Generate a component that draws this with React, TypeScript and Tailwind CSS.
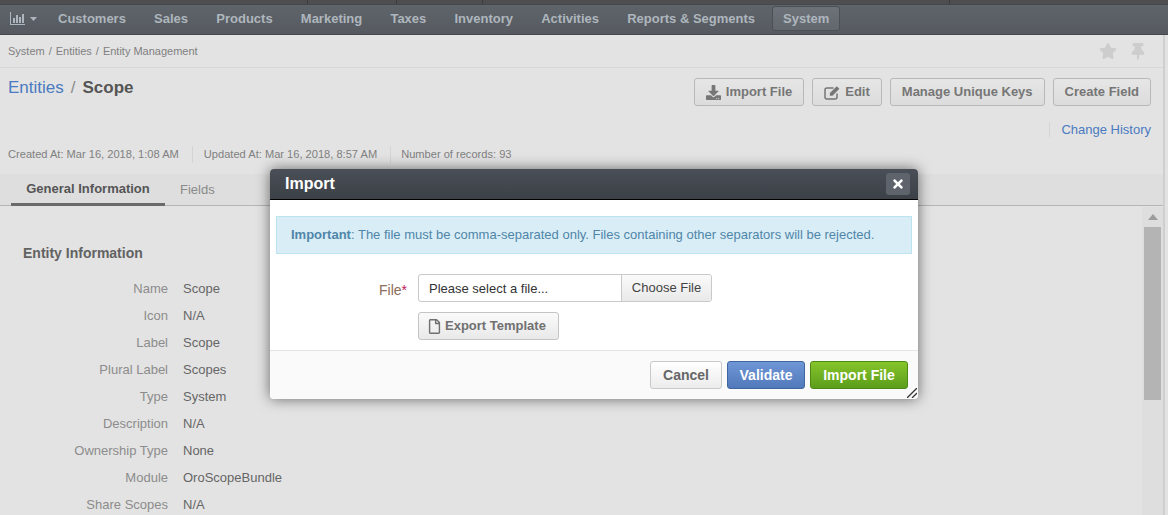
import React from 'react';
import { FaDownload, FaRegFile, FaStar, FaThumbtack, FaTimes } from 'react-icons/fa';

const menu = ['Customers', 'Sales', 'Products', 'Marketing', 'Taxes', 'Inventory', 'Activities', 'Reports & Segments'];

const info = [
  ['Name', 'Scope'],
  ['Icon', 'N/A'],
  ['Label', 'Scope'],
  ['Plural Label', 'Scopes'],
  ['Type', 'System'],
  ['Description', 'N/A'],
  ['Ownership Type', 'None'],
  ['Module', 'OroScopeBundle'],
  ['Share Scopes', 'N/A'],
];

const ActionButton = ({ children }: { children: React.ReactNode }) => (
  <button
    type="button"
    className="flex h-[28px] items-center gap-[5px] rounded-[3px] border border-[#b8b8b8] bg-gradient-to-b from-[#e6e6e6] to-[#dcdcdc] px-[11px] text-[13px] font-bold text-[#767676]"
  >
    {children}
  </button>
);

const App: React.FC = () => {
  return (
    <div className="relative h-[515px] w-[1168px] overflow-hidden bg-[#e3e3e3] font-['Liberation_Sans',Arial,sans-serif] text-[13px]">
      {/* top strip */}
      <div className="flex h-[4px] bg-[#4e4e4e]">
        <div className="w-[308px] border-r border-[#3d3d3d]" />
        <div className="w-[89px] border-r border-[#3d3d3d]" />
        <div className="w-[86px] border-r border-[#3d3d3d]" />
        <div className="w-[467px] border-r border-[#3d3d3d]" />
      </div>

      {/* main menu */}
      <nav className="flex h-[31px] items-center border-y border-[#45494e] bg-gradient-to-b from-[#5f646b] to-[#565a60] pb-[2px] pl-[10px] text-[13px] font-bold text-[#aeb6bd]">
        <span className="mr-[21px] flex items-center gap-[5px]">
          <svg width="15" height="13" viewBox="0 0 15 13" fill="#aeb6bd">
            <path d="M0 0h1v12h14v1H0z" />
            <rect x="3" y="6" width="2" height="5" />
            <rect x="6" y="3" width="2" height="8" />
            <rect x="9" y="5" width="2" height="6" />
            <rect x="12" y="2" width="2" height="9" />
          </svg>
          <svg width="7" height="4" viewBox="0 0 7 4" fill="#aeb6bd">
            <path d="M0 0h7L3.5 4z" />
          </svg>
        </span>
        <div className="flex items-center gap-[28.2px]">
          {menu.map((item) => (
            <span key={item}>{item}</span>
          ))}
        </div>
        <span className="ml-[17px] flex h-[25px] items-center rounded-[3px] border border-[#4c5056] bg-gradient-to-b from-[#6d7279] to-[#62676e] px-[10px]">
          System
        </span>
      </nav>

      <div className="mr-[3px] border-r-2 border-[#cfcfcf]">
        {/* breadcrumbs */}
        <div className="flex h-[33px] items-center justify-between border-b border-[#d8d8d8] pl-[8px] pr-[18px] text-[11px] text-[#808080]">
          <span className="flex gap-[4px]">
            <span>System</span>
            <span>/</span>
            <span>Entities</span>
            <span>/</span>
            <span>Entity Management</span>
          </span>
          <span className="flex items-center gap-[14px] text-[18px] text-[#cdcdcd]">
            <FaStar />
            <FaThumbtack className="h-[17px] w-[14px]" />
          </span>
        </div>

        {/* page title */}
        <div className="flex h-[54px] items-start justify-between pl-[8px] pr-[12px] pt-[10px]">
          <div className="flex items-center text-[17px] leading-[20px]">
            <span className="text-[#4a7ac0]">Entities</span>
            <span className="mx-[7px] text-[#8c8c8c]">/</span>
            <span className="font-bold text-[#555555]">Scope</span>
          </div>
          <div className="flex gap-[8px]">
            <ActionButton>
              <FaDownload className="text-[15px]" />
              Import File
            </ActionButton>
            <ActionButton>
              <svg width="16" height="15" viewBox="0 0 16 15">
                <path d="M13 8.5v3.5a2 2 0 0 1-2 2H3a2 2 0 0 1-2-2V5a2 2 0 0 1 2-2h6.5" fill="none" stroke="#767676" strokeWidth="1.5" />
                <path d="M12.8 1.2l2.6 2.6-6.9 6.9H5.9V8.1z" fill="#767676" />
              </svg>
              Edit
            </ActionButton>
            <ActionButton>Manage Unique Keys</ActionButton>
            <ActionButton>Create Field</ActionButton>
          </div>
        </div>

        <div className="flex h-[15px] justify-end pr-[12px]">
          <span className="border-l border-[#d4d4d4] pl-[11px] text-[13px] leading-[15px] text-[#4a7ac0]">Change History</span>
        </div>

        {/* record meta */}
        <div className="flex h-[30px] items-center pl-[8px] pt-[5px] text-[11.1px] text-[#808080]">
          <span className="border-r border-[#d4d4d4] pr-[13px]">Created At: Mar 16, 2018, 1:08 AM</span>
          <span className="border-r border-[#d4d4d4] pl-[11px] pr-[13px]">Updated At: Mar 16, 2018, 8:57 AM</span>
          <span className="pl-[10px]">Number of records: 93</span>
        </div>

        {/* tabs */}
        <div className="mt-[7px] flex h-[32px] items-stretch border-b border-[#b5b5b5] bg-[#dedede] pl-[11px] text-[13px]">
          <span className="-mb-px flex w-[154px] items-center justify-center border-b-[3px] border-[#6a6a6a] font-bold text-[#555555]">
            General Information
          </span>
          <span className="ml-[15px] flex items-center text-[#8a8a8a]">Fields</span>
        </div>

        {/* scroll area */}
        <div className="flex h-[309px] overflow-hidden">
          <div className="flex-1 pl-[23px] pt-[38px]">
            <h3 className="mb-[13px] text-[14px] font-bold leading-[18px] text-[#626262]">Entity Information</h3>
            <div className="flex flex-col">
              {info.map(([label, value]) => (
                <div key={label} className="flex h-[27px] items-center">
                  <span className="w-[145px] text-right text-[#8c8c8c]">{label}</span>
                  <span className="ml-[15px] text-[#666666]">{value}</span>
                </div>
              ))}
            </div>
          </div>
          <div className="mt-px flex w-[21px] flex-col items-center bg-[#dedede] pt-[7px]">
            <svg width="10" height="6" viewBox="0 0 10 6" fill="#9c9c9c">
              <path d="M5 0l5 6H0z" />
            </svg>
            <div className="mt-[7px] h-[173px] w-[17px] bg-[#b4b4b4]" />
          </div>
        </div>
      </div>

      {/* import dialog */}
      <div className="absolute left-[270px] top-[169px] w-[648px] rounded-[4px] bg-white shadow-[0_0_14px_rgba(0,0,0,0.55)]">
        <div className="flex h-[31px] items-center justify-between rounded-t-[4px] border-b border-black bg-gradient-to-b from-[#4a4f57] to-[#3c4047] pl-[15px] pr-[8px]">
          <span className="text-[16px] font-bold text-white">Import</span>
          <span className="flex h-[22px] w-[24px] items-center justify-center rounded-[3px] bg-[#5f646c] text-[14px] text-white">
            <FaTimes />
          </span>
        </div>
        <div className="px-[6px] pt-[16px]">
          <div className="flex h-[38px] items-center border border-[#bce4f0] bg-[#d9edf7] pl-[14px] text-[#4f86a8]">
            <span>
              <b>Important</b>: The file must be comma-separated only. Files containing other separators will be rejected.
            </span>
          </div>
        </div>
        <div className="flex pl-[137px] pt-[20px]">
          <span className="flex w-[0px] justify-end whitespace-nowrap pr-[11px] pt-[8px] text-[14px] leading-[16px] text-[#8c6d5a]">
            File
            <span className="text-[#c0195a]">*</span>
          </span>
          <div className="flex flex-col gap-[10px]">
            <div className="flex h-[28px] w-[294px] rounded-[3px] border border-[#c9c9c9] text-[13px]">
              <span className="flex flex-1 items-center pl-[10px] pt-px text-[#333333]">Please select a file...</span>
              <span className="flex w-[90px] items-center justify-center rounded-r-[3px] border-l border-[#c9c9c9] bg-gradient-to-b from-[#fafafa] to-[#e9e9e9] text-[#444444]">
                Choose File
              </span>
            </div>
            <button
              type="button"
              className="flex h-[28px] w-[141px] items-center gap-[4px] rounded-[3px] border border-[#c4c4c4] bg-gradient-to-b from-[#fafafa] to-[#e9e9e9] pl-[9px] text-[13px] font-bold text-[#707070]"
            >
              <FaRegFile className="h-[15px] w-[13px]" />
              Export Template
            </button>
          </div>
        </div>
        <div className="relative mt-[10px] flex h-[49px] items-start justify-end gap-[5px] rounded-b-[4px] border-t border-[#e3e3e3] bg-[#fafafa] pr-[10px] pt-[10px] text-[14px] font-bold">
          <button type="button" className="h-[28px] w-[72px] rounded-[3px] border border-[#c9c9c9] bg-gradient-to-b from-[#ffffff] to-[#ececec] text-[#666666]">
            Cancel
          </button>
          <button type="button" className="h-[28px] w-[78px] rounded-[3px] border border-[#41659e] bg-gradient-to-b from-[#6f97d6] to-[#5279bb] text-white">
            Validate
          </button>
          <button type="button" className="h-[28px] w-[98px] rounded-[3px] border border-[#4d8a14] bg-gradient-to-b from-[#86c52b] to-[#5c9d1b] text-white">
            Import File
          </button>
          <svg className="absolute bottom-[1px] right-[1px]" width="10" height="10" viewBox="0 0 10 10" stroke="#333333" strokeWidth="1.3">
            <path d="M0 10L10 0M5 10l5-5" />
          </svg>
        </div>
      </div>
    </div>
  );
};

export default App;
